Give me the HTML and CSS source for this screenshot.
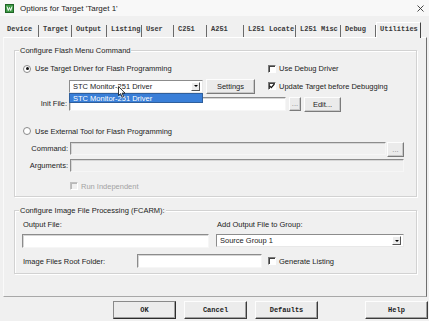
FILE: index.html
```html
<!DOCTYPE html>
<html lang="en">
<head>
  <meta charset="UTF-8" />
  <title>Options for Target 'Target 1'</title>
  <link rel="stylesheet" href="styles.css">
</head>
<body>
  <div class="titlebar">
    <svg class="app-icon" width="9" height="9" viewBox="0 0 9 9">
      <rect x="0.5" y="0.5" width="8" height="8" fill="#3d9a45" stroke="#1f6426"/>
      <polyline points="2,2.5 3.3,6.5 4.5,3.5 5.7,6.5 7,2.5" fill="none" stroke="#fff" stroke-width="1"/>
    </svg>
    <span class="title">Options for Target 'Target 1'</span>
    <svg class="close" width="7" height="7" viewBox="0 0 7 7">
      <path d="M0.5 0.5 L6.5 6.5 M6.5 0.5 L0.5 6.5" stroke="#333" stroke-width="0.9"/>
    </svg>
  </div>

  <!-- tab strip -->
  <div class="tabs">
    <span class="tab">Device</span>
    <span class="tab">Target</span>
    <span class="tab">Output</span>
    <span class="tab">Listing</span>
    <span class="tab">User</span>
    <span class="tab">C251</span>
    <span class="tab">A251</span>
    <span class="tab">L251 Locate</span>
    <span class="tab">L251 Misc</span>
    <span class="tab">Debug</span>
    <span class="tab active">Utilities</span>
  </div>

  <div class="panel">
    <div class="group flash">
      <span class="group-title">Configure Flash Menu Command</span>

      <div class="row row-a">
        <label class="opt opt-main"><span class="radio on"></span>Use Target Driver for Flash Programming</label>
        <label class="opt"><span class="box"></span>Use Debug Driver</label>
      </div>

      <div class="row row-b">
        <div class="select driver">
          <span>STC Monitor-251 Driver</span>
          <span class="arrow"></span>
          <div class="dropdown">STC Monitor-251 Driver</div>
          <svg class="cursor" width="8" height="12" viewBox="0 0 8 12">
            <path d="M0.5 0.5 L0.5 9.5 L2.6 7.6 L4.2 11.2 L5.6 10.6 L4.1 7.1 L7 7.1 Z" fill="#fff" stroke="#111" stroke-width="0.8"/>
          </svg>
        </div>
        <button class="btn-sm settings">Settings</button>
        <label class="opt update"><span class="box checked">
          <svg width="6" height="6" viewBox="0 0 6 6"><path d="M0.6 2.8 L2.3 4.6 L5.4 1" fill="none" stroke="#111" stroke-width="1.2"/></svg>
        </span>Update Target before Debugging</label>
      </div>

      <div class="row row-c">
        <span class="lbl lbl-init">Init File:</span>
        <span class="field init"></span>
        <button class="btn-sm dots">...</button>
        <button class="btn-sm edit">Edit...</button>
      </div>

      <div class="row row-d">
        <label class="opt"><span class="radio"></span>Use External Tool for Flash Programming</label>
      </div>

      <div class="row row-e">
        <span class="lbl lbl-cmd">Command:</span>
        <span class="field off command"></span>
        <button class="btn-sm dots cmd-dots">...</button>
      </div>

      <div class="row row-f">
        <span class="lbl lbl-cmd">Arguments:</span>
        <span class="field off args"></span>
      </div>

      <div class="row row-g">
        <label class="opt disabled"><span class="box off"></span>Run Independent</label>
      </div>
    </div>

    <div class="group image">
      <span class="group-title">Configure Image File Processing (FCARM):</span>

      <div class="row cols labels">
        <span>Output File:</span>
        <span>Add Output File to Group:</span>
      </div>

      <div class="row cols inputs">
        <span class="field out-file"></span>
        <div class="select group-sel">
          <span>Source Group 1</span>
          <span class="arrow"></span>
        </div>
      </div>

      <div class="row row-root">
        <span class="root-lbl">Image Files Root Folder:</span>
        <span class="field root"></span>
        <label class="opt gen"><span class="box"></span>Generate Listing</label>
      </div>
    </div>
  </div>

  <div class="buttons">
    <button class="btn default">OK</button>
    <button class="btn">Cancel</button>
    <button class="btn">Defaults</button>
    <button class="btn help">Help</button>
  </div>
</body>
</html>
```

FILE: styles.css
```css
* {
  box-sizing: border-box;
}

body {
  margin: 0;
  width: 429px;
  height: 321px;
  overflow: hidden;
  background: #f0f0f0;
  color: #1c1c1c;
  font-family: "Liberation Sans", Arial, sans-serif;
  font-size: 7.5px;
}

button {
  margin: 0;
  padding: 0;
  color: #1c1c1c;
}

/* title bar */
.titlebar {
  height: 16px;
  display: flex;
  align-items: center;
  padding-left: 5px;
  background: #f8f8f8;
}

.app-icon {
  display: block;
}

.title {
  margin-left: 6px;
  font-size: 8px;
  color: #222;
}

.close {
  margin-left: auto;
  margin-right: 5px;
}

/* tabs */
.tabs {
  display: grid;
  grid-template-columns: 36px 33px 35px 35px 32px 33px 37px 52px 45px 35px 45px;
  margin: 6px 0 0 3px;
  height: 15px;
}

.tab {
  margin-top: 3px;
  height: 12px;
  line-height: 12px;
  padding-left: 4px;
  border-right: 1px solid #6a6a6a;
  font: bold 7px "Liberation Mono", monospace;
  color: #3a3a3a;
  white-space: nowrap;
}

.tab.active {
  margin-top: 0;
  height: 16px;
  line-height: 12px;
  padding-left: 3px;
  border: 1px solid #fff;
  border-bottom: none;
  border-right: 1px solid #444;
  background: #f0f0f0;
  position: relative;
  z-index: 1;
}

/* tab page */
.panel {
  margin-left: 3px;
  width: 424px;
  height: 260px;
  border-top: 1px solid #fff;
  border-left: 1px solid #fafafa;
  border-right: 1px solid #6f6f6f;
  border-bottom: 1px solid #a8a8a8;
  padding: 12px 0 0 10px;
}

.group {
  position: relative;
  width: 403px;
  border: 1px solid #d2d2d2;
  box-shadow: inset 1px 1px 0 #fff, 1px 1px 0 #fff;
}

.group.flash {
  height: 147px;
}

.group.image {
  height: 64px;
  margin-top: 13px;
}

.group-title {
  position: absolute;
  left: 4px;
  top: -5px;
  padding: 0 1px;
  line-height: 9px;
  background: #f0f0f0;
}

.row {
  display: flex;
  align-items: center;
}

/* check boxes and radios */
.opt {
  display: flex;
  align-items: center;
  white-space: nowrap;
}

.opt.disabled {
  color: #a3a3a3;
}

.radio {
  width: 8px;
  height: 8px;
  margin-right: 4px;
  border-radius: 50%;
  border: 1px solid #8a8a8a;
  background: #fff;
  display: flex;
  align-items: center;
  justify-content: center;
}

.radio.on::after {
  content: "";
  width: 3px;
  height: 3px;
  border-radius: 50%;
  background: #111;
}

.box {
  width: 8px;
  height: 8px;
  margin-right: 3px;
  border: 1px solid;
  border-color: #7a7a7a #fff #fff #7a7a7a;
  box-shadow: inset 1px 1px 0 #404040;
  background: #fff;
  display: flex;
  align-items: center;
  justify-content: center;
}

.box.off {
  background: #f0f0f0;
  box-shadow: inset 1px 1px 0 #b8b8b8;
  border-color: #c0c0c0 #fff #fff #c0c0c0;
}

.box svg {
  display: block;
}

/* fields */
.field {
  display: block;
  height: 14px;
  border: 1px solid;
  border-color: #8c8c8c #f6f6f6 #f6f6f6 #8c8c8c;
  box-shadow: inset 1px 1px 0 #d6d6d6;
  background: #fff;
}

.field.off {
  background: #f0f0f0;
  height: 13px;
}

.select {
  position: relative;
  height: 13px;
  display: flex;
  align-items: center;
  justify-content: space-between;
  padding: 0 2px 0 3px;
  background: #fff;
  border: 1px solid;
  border-color: #8c8c8c #e8e8e8 #e8e8e8 #8c8c8c;
}

.arrow {
  width: 9px;
  height: 9px;
  border: 1px solid;
  border-color: #fff #555 #555 #fff;
  background: #ececec;
  display: flex;
  align-items: center;
  justify-content: center;
}

.arrow::after {
  content: "";
  border-left: 2px solid transparent;
  border-right: 2px solid transparent;
  border-top: 2px solid #000;
}

.dropdown {
  position: absolute;
  left: -1px;
  top: 12px;
  width: 134px;
  height: 10px;
  line-height: 9px;
  padding-left: 3px;
  background: #3a7fd8;
  border: 1px solid #2f5f9c;
  color: #fff;
  z-index: 2;
}

.cursor {
  position: absolute;
  left: 48px;
  top: 5px;
  z-index: 3;
}

.btn-sm {
  height: 15px;
  font-family: "Liberation Sans", Arial, sans-serif;
  font-size: 7.5px;
  background: #ebebeb;
  border: 1px solid;
  border-color: #fdfdfd #7b7b7b #7b7b7b #fdfdfd;
  box-shadow: inset -1px -1px 0 #c8c8c8;
}

/* flash group rows */
.row-a {
  height: 13px;
  margin-top: 11px;
  padding-left: 8px;
}

.opt-main {
  width: 245px;
}

.row-b {
  height: 16px;
  margin-top: 3px;
  padding-left: 54px;
}

.driver {
  width: 134px;
}

.settings {
  width: 49px;
  margin-left: 3px;
}

.update {
  margin-left: 13px;
}

.row-c {
  height: 15px;
  margin-top: 3px;
  align-items: flex-start;
}

.lbl {
  text-align: right;
  padding-right: 2px;
  line-height: 14px;
}

.lbl-init {
  width: 54px;
}

.init {
  width: 217px;
}

.dots {
  width: 12px;
  height: 14px;
  margin-left: 3px;
  line-height: 8px;
  color: #888;
}

.edit {
  width: 37px;
  margin-left: 3px;
}

.row-d {
  height: 12px;
  margin-top: 13px;
  padding-left: 8px;
}

.row-e {
  height: 15px;
  margin-top: 5px;
  align-items: flex-start;
}

.lbl-cmd {
  width: 55px;
  line-height: 13px;
}

.command {
  width: 316px;
}

.cmd-dots {
  width: 17px;
  height: 15px;
  margin-left: 1px;
}

.row-f {
  height: 14px;
  margin-top: 2px;
  align-items: flex-start;
}

.args {
  width: 334px;
  height: 14px;
}

.row-g {
  height: 12px;
  margin-top: 7px;
  padding-left: 55px;
}

/* image group rows */
.cols {
  display: grid;
  grid-template-columns: 187px 188px;
  column-gap: 7px;
  padding-left: 7px;
}

.labels {
  height: 10px;
  margin-top: 8px;
}

.labels span {
  padding-left: 1px;
}

.inputs {
  margin-top: 5px;
  align-items: start;
}

.out-file {
  height: 14px;
}

.row-root {
  height: 14px;
  margin-top: 6px;
  padding-left: 8px;
}

.root-lbl {
  width: 114px;
}

.root {
  width: 125px;
}

.gen {
  margin-left: 6px;
}

/* dialog buttons */
.buttons {
  display: flex;
  gap: 8px;
  margin-top: 4px;
  padding: 0 1px 0 113px;
}

.btn {
  width: 63px;
  height: 18px;
  font: bold 7px "Liberation Mono", monospace;
  background: #ececec;
  border: 1px solid;
  border-color: #fdfdfd #3c3c3c #3c3c3c #fdfdfd;
  box-shadow: inset -1px -1px 0 #a0a0a0;
}

.btn.default {
  border-color: #8a8a8a #2c2c2c #2c2c2c #8a8a8a;
}

.help {
  margin-left: auto;
}
```
